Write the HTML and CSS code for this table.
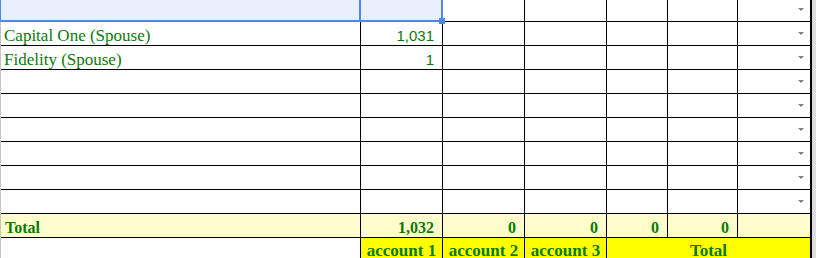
FILE: index.html
```html
<!DOCTYPE html>
<html>
<head>
<meta charset="utf-8">
<link rel="stylesheet" href="styles.css">
</head>
<body>
<div class="sheet">
  <div class="grid">
    <div class="row row-sel">
      <div class="cell sel sel-a"></div>
      <div class="cell sel sel-b"><span class="handle"></span></div>
      <div class="cell"></div>
      <div class="cell"></div>
      <div class="cell"></div>
      <div class="cell"></div>
      <div class="cell last drop"><span class="arrow"></span></div>
    </div>
    <div class="row">
      <div class="cell label">Capital One (Spouse)</div>
      <div class="cell num">1,031</div>
      <div class="cell"></div>
      <div class="cell"></div>
      <div class="cell"></div>
      <div class="cell"></div>
      <div class="cell last drop"><span class="arrow"></span></div>
    </div>
    <div class="row">
      <div class="cell label">Fidelity (Spouse)</div>
      <div class="cell num">1</div>
      <div class="cell"></div>
      <div class="cell"></div>
      <div class="cell"></div>
      <div class="cell"></div>
      <div class="cell last drop"><span class="arrow"></span></div>
    </div>
    <div class="row">
      <div class="cell"></div><div class="cell"></div><div class="cell"></div><div class="cell"></div><div class="cell"></div><div class="cell"></div>
      <div class="cell last drop"><span class="arrow"></span></div>
    </div>
    <div class="row">
      <div class="cell"></div><div class="cell"></div><div class="cell"></div><div class="cell"></div><div class="cell"></div><div class="cell"></div>
      <div class="cell last drop"><span class="arrow"></span></div>
    </div>
    <div class="row">
      <div class="cell"></div><div class="cell"></div><div class="cell"></div><div class="cell"></div><div class="cell"></div><div class="cell"></div>
      <div class="cell last drop"><span class="arrow"></span></div>
    </div>
    <div class="row">
      <div class="cell"></div><div class="cell"></div><div class="cell"></div><div class="cell"></div><div class="cell"></div><div class="cell"></div>
      <div class="cell last drop"><span class="arrow"></span></div>
    </div>
    <div class="row">
      <div class="cell"></div><div class="cell"></div><div class="cell"></div><div class="cell"></div><div class="cell"></div><div class="cell"></div>
      <div class="cell last drop"><span class="arrow"></span></div>
    </div>
    <div class="row">
      <div class="cell"></div><div class="cell"></div><div class="cell"></div><div class="cell"></div><div class="cell"></div><div class="cell"></div>
      <div class="cell last drop"><span class="arrow"></span></div>
    </div>
    <div class="row total">
      <div class="cell tlabel">Total</div>
      <div class="cell tnum">1,032</div>
      <div class="cell tnum">0</div>
      <div class="cell tnum">0</div>
      <div class="cell tnum">0</div>
      <div class="cell tnum">0</div>
      <div class="cell last"></div>
    </div>
    <div class="row accounts">
      <div class="cell blank"></div>
      <div class="cell acct">account 1</div>
      <div class="cell acct">account 2</div>
      <div class="cell acct">account 3</div>
      <div class="cell acct acct-total last">Total</div>
    </div>
  </div>
  <div class="scroll"></div>
</div>
</body>
</html>
```

FILE: styles.css
```css
html, body {
  margin: 0;
  padding: 0;
  background: #ffffff;
  overflow: hidden;
}

.sheet {
  display: flex;
  align-items: stretch;
  height: 258px;
}

.grid {
  width: 812px;
  margin-top: -2px;
}

.scroll {
  width: 4px;
  background: #dadce0;
  flex: none;
}

.row {
  display: grid;
  grid-template-columns: 360px 82px 82px 82px 61px 70px 74px;
  height: 24px;
  border-left: 1px solid #c4c4c4;
}

.cell {
  box-sizing: border-box;
  border-right: 1px solid #000;
  border-bottom: 1px solid #000;
  display: flex;
  align-items: flex-end;
  color: #0a7a0a;
  min-width: 0;
  white-space: nowrap;
}

.cell.last {
  border-right: 2px solid #000;
}

.row-sel {
  border-left-color: #4a89f3;
}

.sel {
  background: #e8f0fe;
  border-bottom: 2px solid #4a89f3;
  position: relative;
}

.sel-a {
  border-right: 2px solid #4a89f3;
}

.sel-b {
  border-right: 2px solid #4a89f3;
}

.handle {
  position: absolute;
  right: -4px;
  bottom: -4px;
  width: 6px;
  height: 6px;
  background: #4a89f3;
  z-index: 2;
}

.drop {
  align-items: center;
  justify-content: flex-end;
  padding-right: 6px;
}

.arrow {
  width: 0;
  height: 0;
  border-left: 3px solid transparent;
  border-right: 3px solid transparent;
  border-top: 3px solid #7f7f7f;
}

.label {
  font-family: "Liberation Serif", serif;
  font-size: 17px;
  line-height: 17px;
  padding-left: 3px;
  padding-bottom: 1px;
}

.num {
  font-family: "Liberation Sans", sans-serif;
  font-size: 15px;
  line-height: 15px;
  justify-content: flex-end;
  padding-right: 8px;
  padding-bottom: 2px;
}

.total .cell {
  background: #fffdcc;
}

.tlabel, .tnum, .acct {
  font-family: "Liberation Serif", serif;
  font-weight: bold;
  font-size: 16px;
  line-height: 16px;
}

.tlabel {
  padding-left: 4px;
  padding-bottom: 1px;
}

.tnum {
  justify-content: flex-end;
  padding-right: 8px;
  padding-bottom: 1px;
}

.accounts .cell {
  border-bottom: none;
}

.blank {
  border-right: 1px solid #000;
}

.acct {
  background: #ffff00;
  justify-content: center;
  align-items: flex-start;
  padding-top: 4px;
  font-size: 17px;
  line-height: 17px;
}

.acct-total {
  grid-column: span 3;
}
```
